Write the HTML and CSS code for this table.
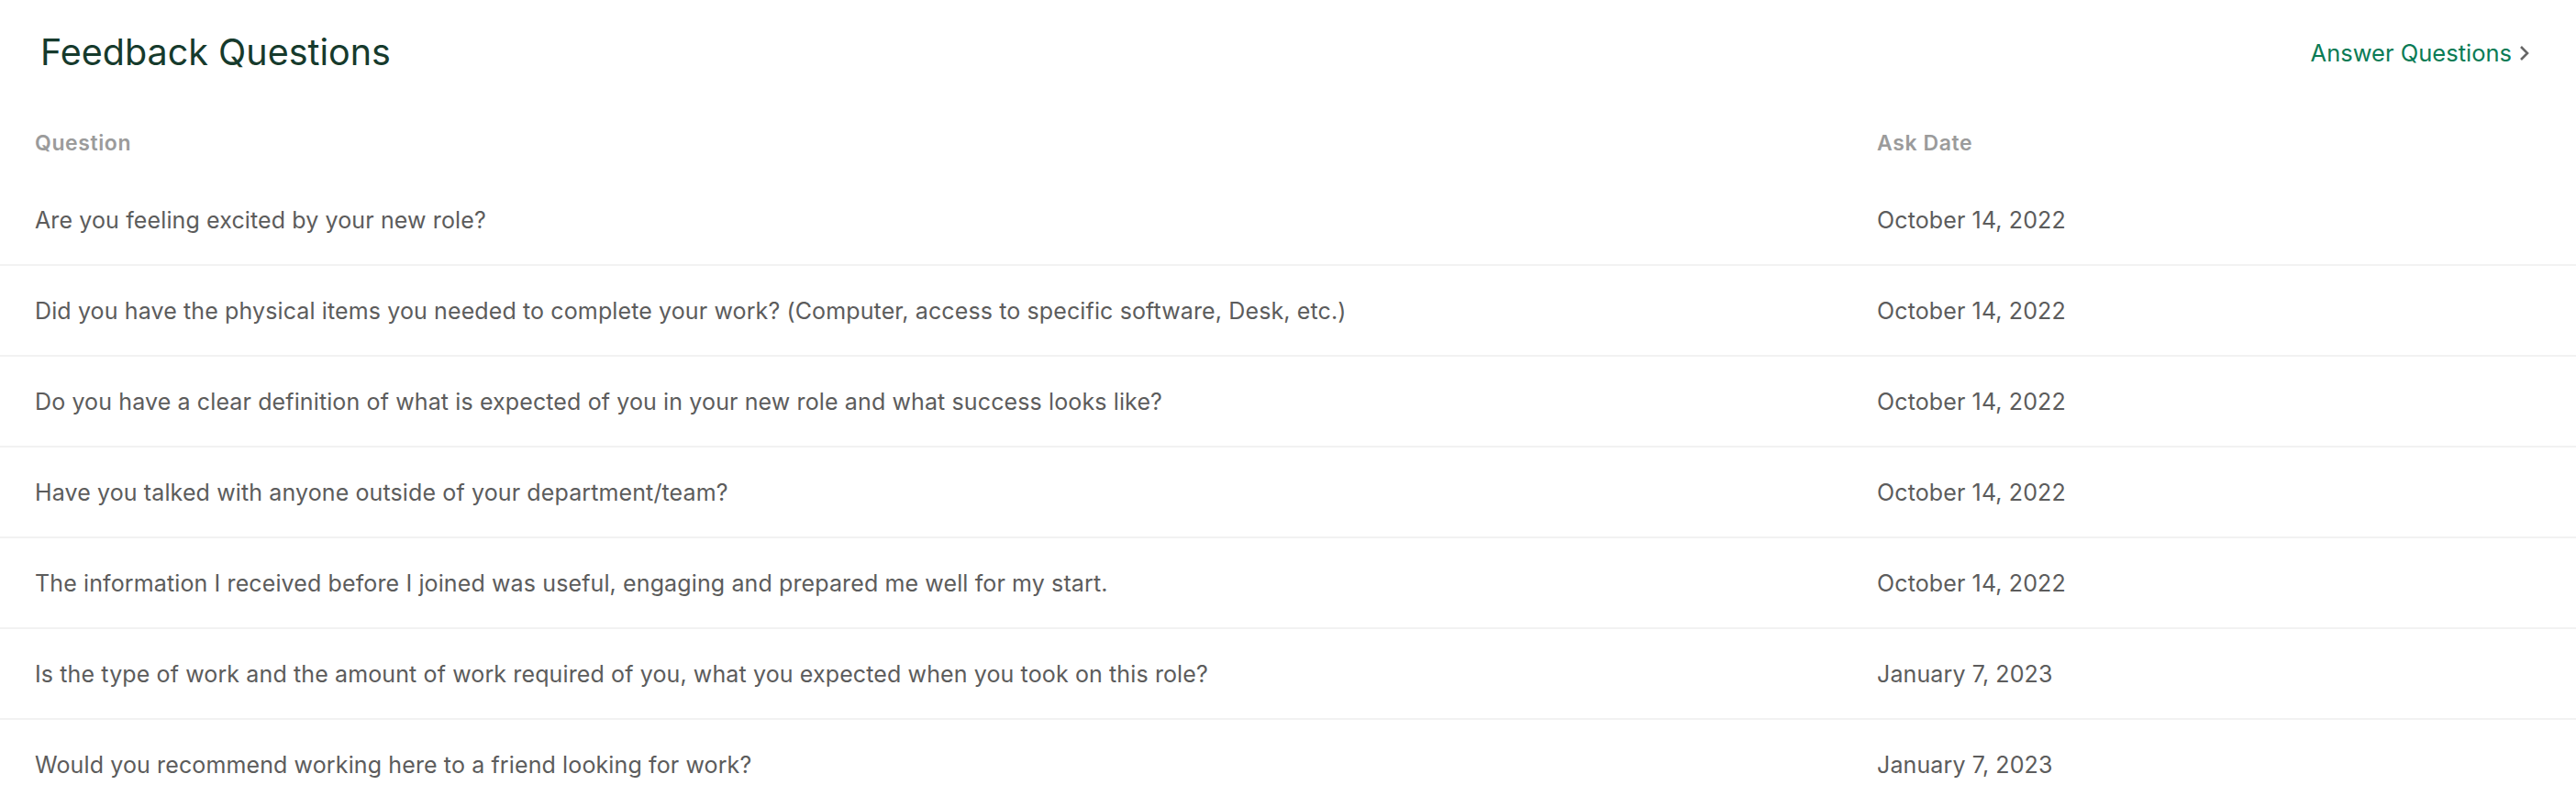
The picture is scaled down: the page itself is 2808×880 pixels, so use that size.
FILE: index.html
```html
<!DOCTYPE html>
<html lang="en">
<head>
<meta charset="utf-8">
<title>Feedback Questions</title>
<link rel="stylesheet" href="styles.css">
</head>
<body>
<main class="page">
  <header class="page-header">
    <h1 class="page-title">Feedback Questions</h1>
    <a class="answer-link" href="#">Answer Questions
      <svg class="chevron" width="12" height="18" viewBox="0 0 12 18" aria-hidden="true"><path d="M2 2 L9 9 L2 16" fill="none" stroke="#666666" stroke-width="2.6"/></svg>
    </a>
  </header>
  <section class="table">
    <div class="row head-row">
      <div class="cell">Question</div>
      <div class="cell">Ask Date</div>
    </div>
    <div class="row body-row">
      <div class="cell">Are you feeling excited by your new role?</div>
      <div class="cell">October 14, 2022</div>
    </div>
    <div class="row body-row">
      <div class="cell">Did you have the physical items you needed to complete your work? (Computer, access to specific software, Desk, etc.)</div>
      <div class="cell">October 14, 2022</div>
    </div>
    <div class="row body-row">
      <div class="cell">Do you have a clear definition of what is expected of you in your new role and what success looks like?</div>
      <div class="cell">October 14, 2022</div>
    </div>
    <div class="row body-row">
      <div class="cell">Have you talked with anyone outside of your department/team?</div>
      <div class="cell">October 14, 2022</div>
    </div>
    <div class="row body-row">
      <div class="cell">The information I received before I joined was useful, engaging and prepared me well for my start.</div>
      <div class="cell">October 14, 2022</div>
    </div>
    <div class="row body-row">
      <div class="cell">Is the type of work and the amount of work required of you, what you expected when you took on this role?</div>
      <div class="cell">January 7, 2023</div>
    </div>
    <div class="row body-row">
      <div class="cell">Would you recommend working here to a friend looking for work?</div>
      <div class="cell">January 7, 2023</div>
    </div>
  </section>
</main>
</body>
</html>
```
FILE: styles.css
```css
* { box-sizing: border-box; }
html, body { margin: 0; padding: 0; background: #ffffff; }
body { font-family: Inter, "Liberation Sans", Arial, sans-serif; }

.page-header {
  display: flex;
  align-items: center;
  justify-content: space-between;
  height: 116px;
  padding: 0 50px 0 44px;
}
.page-title {
  margin: 0;
  font-size: 39.5px;
  font-weight: 400;
  color: #163a2c;
  line-height: 1.2;
}
.answer-link {
  display: flex;
  align-items: center;
  gap: 8px;
  font-size: 25.5px;
  color: #0a7b55;
  text-decoration: none;
  line-height: 1.2;
}
.chevron { display: block; }

.table { display: flex; flex-direction: column; }
.row {
  display: grid;
  grid-template-columns: 2008px 1fr;
}
.cell { padding-left: 38px; }
.head-row {
  height: 75px;
  align-items: end;
  padding-bottom: 20px;
  font-size: 23px;
  font-weight: 600;
  letter-spacing: 0.6px;
  color: #9b9b9b;
  line-height: 1.2;
}
.body-row {
  height: 99px;
  align-items: center;
  border-bottom: 2px solid #f2f2f2;
  font-size: 25px;
  letter-spacing: 0.12px;
  color: #5c5c5c;
  line-height: 1.2;
}
```
